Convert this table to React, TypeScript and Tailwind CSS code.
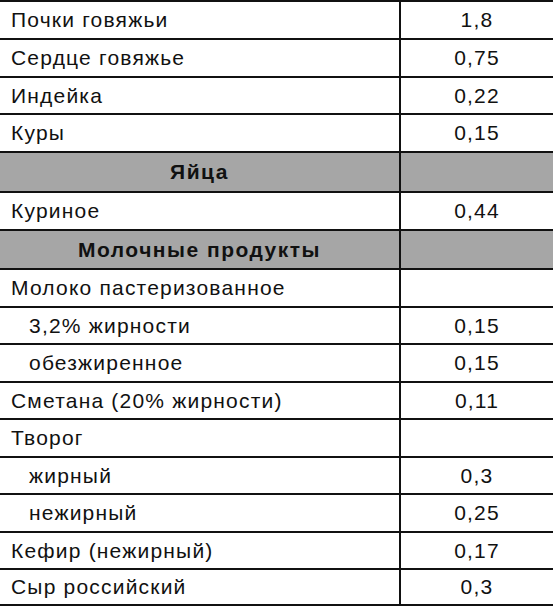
import React from "react";

type Row = { label: string; value?: string; h: number; header?: boolean; indent?: boolean };

const rows: Row[] = [
  { label: "Почки говяжьи", value: "1,8", h: 38 },
  { label: "Сердце говяжье", value: "0,75", h: 38 },
  { label: "Индейка", value: "0,22", h: 37 },
  { label: "Куры", value: "0,15", h: 38 },
  { label: "Яйца", h: 40, header: true },
  { label: "Куриное", value: "0,44", h: 38 },
  { label: "Молочные продукты", h: 39, header: true },
  { label: "Молоко пастеризованное", h: 38 },
  { label: "3,2% жирности", value: "0,15", h: 37, indent: true },
  { label: "обезжиренное", value: "0,15", h: 38, indent: true },
  { label: "Сметана (20% жирности)", value: "0,11", h: 37 },
  { label: "Творог", h: 38 },
  { label: "жирный", value: "0,3", h: 37, indent: true },
  { label: "нежирный", value: "0,25", h: 38, indent: true },
  { label: "Кефир (нежирный)", value: "0,17", h: 37 },
  { label: "Сыр российский", value: "0,3", h: 38 },
];

export default function App() {
  return (
    <div
      className="w-[553px] bg-white text-[#111] text-[21px] tracking-[1.2px]"
      style={{ fontFamily: '"Liberation Sans", Arial, sans-serif' }}
    >
      {rows.map((r, i) => (
        <div
          key={i}
          className={`flex border-t-2 border-[#111] ${r.header ? "bg-[#a6a6a6]" : "bg-white"} ${
            i === rows.length - 1 ? "border-b-2" : ""
          }`}
          style={{ height: r.h }}
        >
          <div
            className={`w-[401px] flex items-center border-r-2 border-[#111] ${
              r.header ? "justify-center font-bold tracking-[1.5px]" : r.indent ? "pl-[29px]" : "pl-[11px]"
            }`}
          >
            {r.label}
          </div>
          <div className="flex-1 flex items-center justify-center">{r.value ?? ""}</div>
        </div>
      ))}
    </div>
  );
}
